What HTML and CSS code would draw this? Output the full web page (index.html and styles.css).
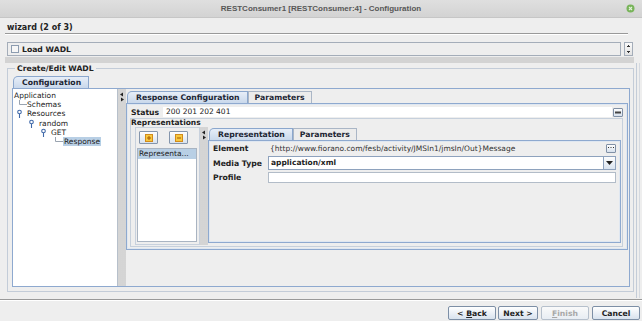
FILE: index.html
```html
<!DOCTYPE html>
<html lang="en">
<head>
    <meta charset="UTF-8">
    <meta name="viewport" content="width=device-width, initial-scale=1.0">
    <title>RESTConsumer1 - Configuration</title>
    <link rel="stylesheet" href="styles.css">
</head>
<body>
    <div class="titlebar">
        <span></span>
        <span class="title">RESTConsumer1 [RESTConsumer:4] - Configuration</span>
        <span class="close">
            <svg width="9" height="9" viewBox="0 0 9 9"><circle cx="4.5" cy="4.5" r="4" fill="#78b45a"/><path d="M3 3l3 3M6 3l-3 3" stroke="#e4f2da" stroke-width="1.1"/></svg>
        </span>
    </div>

    <div class="wizard-head">wizard (2 of 3)</div>

    <div class="load-row">
        <div class="load-box"><span class="check"></span><b>Load WADL</b></div>
        <div class="spinner">
            <svg width="7" height="12" viewBox="0 0 7 12"><path d="M2 4h3v-1h-1v-1h-1v1h-1zM2 8h3v1h-1v1h-1v-1h-1z" fill="#333"/></svg>
        </div>
    </div>

    <div class="hsplit"></div>

    <div class="group-wrap">
        <fieldset class="group">
            <legend>Create/Edit WADL</legend>
            <div class="tabs">
                <div class="tab active">Configuration</div>
            </div>
            <div class="config">
                <div class="tree">
                    <div class="node">Application</div>
                    <div class="node"><svg class="conn" width="13" height="9" viewBox="0 0 13 9"><path d="M5.5 0V4.5H13"/></svg>Schemas</div>
                    <div class="node"><svg class="handle" width="13" height="9" viewBox="0 0 13 9"><circle cx="5.5" cy="3" r="1.8"/><path d="M5.5 4.8V9"/></svg>Resources</div>
                    <div class="node lvl2"><svg class="handle" width="13" height="9" viewBox="0 0 13 9"><circle cx="5.5" cy="3" r="1.8"/><path d="M5.5 4.8V9"/></svg>random</div>
                    <div class="node lvl3"><svg class="handle" width="13" height="9" viewBox="0 0 13 9"><circle cx="5.5" cy="3" r="1.8"/><path d="M5.5 4.8V9"/></svg>GET</div>
                    <div class="node lvl4"><svg class="conn" width="13" height="9" viewBox="0 0 13 9"><path d="M5.5 0V4.5H13"/></svg><span class="sel">Response</span></div>
                </div>

                <div class="vsplit">
                    <svg width="6" height="10" viewBox="0 0 6 10"><path d="M4 0.5L1 2.5L4 4.5Z M2 5.5L5 7.5L2 9.5Z" fill="#222"/></svg>
                </div>

                <div class="resp">
                    <div class="tabs">
                        <div class="tab active">Response Configuration</div>
                        <div class="tab">Parameters</div>
                    </div>
                    <div class="resp-panel">
                        <div class="status-row">
                            <b class="status-label">Status</b>
                            <div class="field">200 201 202 401</div>
                            <span class="mini-btn"><svg width="6" height="3" viewBox="0 0 6 3"><rect x="0" y="0.5" width="6" height="2" fill="#444"/></svg></span>
                        </div>

                        <div class="reps">
                            <div class="reps-title">Representations</div>
                            <div class="reps-body">
                                <div class="rep-list-box">
                                    <div class="rep-buttons">
                                        <span class="tool-btn"><svg width="8" height="8" viewBox="0 0 8 8"><rect x="0.5" y="0.5" width="7" height="7" fill="#f6c840" stroke="#d18b1c"/><path d="M4 2v4M2 4h4" stroke="#a65a00" stroke-width="1"/></svg></span>
                                        <span class="tool-btn"><svg width="8" height="8" viewBox="0 0 8 8"><rect x="0.5" y="0.5" width="7" height="7" fill="#f6c840" stroke="#d18b1c"/><path d="M2 4h4" stroke="#a65a00" stroke-width="1"/></svg></span>
                                    </div>
                                    <div class="rep-list">
                                        <div class="item sel">Representa...</div>
                                    </div>
                                </div>

                                <div class="vsplit small">
                                    <svg width="6" height="10" viewBox="0 0 6 10"><path d="M4 0.5L1 2.5L4 4.5Z M2 5.5L5 7.5L2 9.5Z" fill="#222"/></svg>
                                </div>

                                <div class="rep-detail">
                                    <div class="tabs">
                                        <div class="tab active">Representation</div>
                                        <div class="tab">Parameters</div>
                                    </div>
                                    <div class="rep-panel">
                                        <div class="row element">
                                            <b class="label">Element</b>
                                            <span class="value">{http://www.fiorano.com/fesb/activity/JMSIn1/jmsIn/Out}Message</span>
                                            <span class="mini-btn"><svg width="6" height="2" viewBox="0 0 6 2"><path d="M0 0h1v1h-1zM2.5 0h1v1h-1zM5 0h1v1h-1z" fill="#333"/></svg></span>
                                        </div>
                                        <div class="row media">
                                            <b class="label">Media Type</b>
                                            <div class="combo">application/xml</div>
                                            <span class="combo-arrow"><svg width="7" height="4" viewBox="0 0 7 4"><path d="M0 0h7L3.5 4z" fill="#222"/></svg></span>
                                        </div>
                                        <div class="row profile">
                                            <b class="label">Profile</b>
                                            <div class="input"></div>
                                        </div>
                                    </div>
                                </div>
                            </div>
                        </div>
                    </div>
                </div>
            </div>
        </fieldset>
        <div class="edge"></div>
    </div>

    <div class="footer">
        <button class="btn back">&lt; <u>B</u>ack</button>
        <button class="btn next">Next &gt;</button>
        <button class="btn finish" disabled><u>F</u>inish</button>
        <button class="btn cancel">Cancel</button>
    </div>
</body>
</html>
```

FILE: styles.css
```css
* {
    box-sizing: border-box;
}

body {
    margin: 0;
    width: 642px;
    height: 321px;
    overflow: hidden;
    background-color: #eeeeee;
    font-family: "DejaVu Sans", sans-serif;
    font-size: 7.5px;
    color: #222;
}

b, .tab, legend, .btn {
    font-size: 7.7px;
}

/* window title */
.titlebar {
    height: 18px;
    display: grid;
    grid-template-columns: 1fr auto 1fr;
    align-items: center;
    background: linear-gradient(#dfdfdf, #d3d3d3);
    border-bottom: 1px solid #c6c6c6;
}

.titlebar .title {
    font: bold 8px "Liberation Sans", sans-serif;
    color: #575757;
}

.titlebar .close {
    justify-self: end;
    margin-right: 7px;
    display: flex;
}

.wizard-head {
    margin: 4px 14px 0 5px;
    padding: 0 2px;
    height: 12px;
    line-height: 11px;
    font-size: 8px;
    font-weight: bold;
    border-bottom: 1px solid #999;
    box-shadow: 0 1px 0 #fff;
}

/* load wadl */
.load-row {
    display: flex;
    height: 14px;
    margin-top: 8px;
    padding: 0 9px 0 7px;
}

.load-box {
    flex: 1;
    display: flex;
    align-items: center;
    padding-left: 3px;
    border: 1px solid #a4adb9;
}

.check {
    width: 8px;
    height: 8px;
    margin-right: 3px;
    border: 1px solid #8c9cb0;
    background: #f6f6f6;
}

.spinner {
    width: 9px;
    margin-left: 3px;
    display: flex;
    align-items: center;
    justify-content: center;
    border: 1px solid #a4adb9;
    background: linear-gradient(#fafafa, #e2e2e2);
}

.hsplit {
    height: 6px;
    margin: 1px 8px 0 5px;
    background-image: radial-gradient(circle, #c4c4c4 0.6px, transparent 0.9px);
    background-size: 2px 2px;
}

/* create / edit group */
.group-wrap {
    display: flex;
    height: 229px;
    padding: 0 2px 0 7px;
}

.group {
    flex: 1;
    min-width: 0;
    margin: 0;
    padding: 0 3px 2px 4px;
    border: 1px solid #c3ccd8;
}

.group legend {
    margin-left: 3px;
    padding: 0 2px;
    line-height: 11px;
    font-weight: bold;
}

.edge {
    width: 4px;
    margin: 0 0 -6px 2px;
    border-left: 1px solid #c3ccd8;
    border-right: 1px solid #d4d9e0;
}

.tabs {
    display: flex;
    height: 12px;
    margin-left: 1px;
}

.group > .tabs {
    margin-top: 2px;
}

.tab {
    padding: 0 6px;
    line-height: 11px;
    font-weight: bold;
    color: #1c2533;
    background: #ececec;
    border: 1px solid #aab6c6;
    border-bottom: none;
}

.tab.active {
    padding: 0 7px 0 8px;
    background: linear-gradient(#e7eef8, #c9d8eb);
    border-color: #8ba7cd;
    border-top-left-radius: 5px;
}

.config {
    display: flex;
    height: 199px;
    border: 1px solid #8ea9cf;
}

/* tree */
.tree {
    width: 105px;
    padding: 2px 0 0 1px;
    background: #fff;
    border-right: 1px solid #b7c0cb;
}

.node {
    display: flex;
    align-items: center;
    height: 9.2px;
    white-space: nowrap;
}

.node svg {
    flex: none;
}

.node.lvl2 { padding-left: 12px; }
.node.lvl3 { padding-left: 24px; }
.node.lvl4 { padding-left: 36px; }

.conn path {
    fill: none;
    stroke: #9aa4b0;
    stroke-width: 1;
}

.handle circle,
.handle path {
    fill: none;
    stroke: #3f68a8;
    stroke-width: 1.1;
}

.sel {
    background: #b8cfe5;
}

.node .sel {
    padding: 0 1px;
}

.vsplit {
    width: 8px;
    padding: 3px 0 0 1px;
    background-image: radial-gradient(circle, #c6c6c6 0.6px, transparent 0.9px);
    background-size: 2px 2px;
    background-color: #eee;
}

/* response configuration */
.resp {
    flex: 1;
    display: flex;
    flex-direction: column;
    padding: 2px 1px 0 0;
}

.resp-panel {
    height: 147px;
    padding: 3px 4px 0 3px;
    border: 1px solid #8ea9cf;
    box-shadow: inset 0 0 0 1px #dfe7f1;
}

.status-row {
    display: flex;
    align-items: center;
    height: 10px;
}

.status-label {
    width: 33px;
    padding-left: 1px;
}

.field {
    flex: 1;
    height: 10px;
    line-height: 10px;
    padding-left: 3px;
    background: #fff;
}

.mini-btn {
    flex: none;
    width: 10px;
    height: 9px;
    margin-left: 1px;
    display: flex;
    align-items: center;
    justify-content: center;
    border: 1px solid #8090a6;
    border-radius: 1px;
    background: linear-gradient(#fdfdfd, #d7e1ed);
}

.reps {
    height: 129px;
    margin-top: 1px;
    padding: 0 1px 0 4px;
    border: 1px solid #c6d0dc;
}

.reps-title {
    height: 8px;
    line-height: 8px;
    margin-left: -4px;
    font-weight: bold;
}

.reps-body {
    display: flex;
    height: 118px;
}

.rep-list-box {
    width: 65px;
    display: flex;
    flex-direction: column;
    padding: 3px 2px 2px 1px;
    border: 1px solid #c8d1dd;
}

.rep-buttons {
    display: flex;
    gap: 11px;
    padding-left: 2px;
}

.tool-btn {
    width: 19px;
    height: 13px;
    display: flex;
    align-items: center;
    justify-content: center;
    border: 1px solid #8495ac;
    border-radius: 1px;
    background: linear-gradient(#fdfdfd, #d9e3ef);
}

.rep-list {
    flex: 1;
    margin-top: 4px;
    background: #fff;
    border: 1px solid #a9b4c2;
}

.item {
    height: 10px;
    line-height: 10px;
    padding-left: 1px;
    white-space: nowrap;
    overflow: hidden;
}

.rep-detail {
    flex: 1;
    display: flex;
    flex-direction: column;
    padding-top: 1px;
}

.rep-panel {
    height: 103px;
    padding: 2px 4px 0 4px;
    border: 1px solid #8ea9cf;
    box-shadow: inset 0 0 0 1px #dfe7f1;
}

.row {
    display: flex;
    align-items: center;
}

.row .label {
    width: 55px;
    flex: none;
}

.row.element {
    height: 10px;
}

.row.element .value {
    padding-left: 2px;
    color: #333;
    white-space: nowrap;
}

.row.element .mini-btn {
    margin-left: auto;
}

.row.media {
    height: 14px;
    margin-top: 3px;
}

.combo {
    flex: 1;
    height: 14px;
    line-height: 12px;
    padding-left: 2px;
    font-weight: bold;
    background: #fff;
    border: 1px solid #8ea2bd;
}

.combo-arrow {
    width: 12px;
    height: 14px;
    display: flex;
    align-items: center;
    justify-content: center;
    border: 1px solid #8ea2bd;
    border-left: none;
    background: linear-gradient(#fdfdfd, #d9e3ef);
}

.row.profile {
    height: 11px;
    margin-top: 2px;
}

.input {
    flex: 1;
    height: 11px;
    background: #fff;
    border: 1px solid #b2bcc8;
}

/* wizard buttons */
.footer {
    display: flex;
    justify-content: flex-end;
    gap: 2px;
    margin-top: 7px;
    padding: 6px 2px 0 0;
    border-top: 1px solid #999;
    box-shadow: inset 0 1px 0 #fff;
}

.btn {
    height: 14px;
    padding: 0;
    font-family: "DejaVu Sans", sans-serif;
    font-weight: bold;
    color: #222;
    border: 1px solid #7d8fa6;
    border-radius: 2px;
    background: linear-gradient(#ffffff, #d8e2ee);
}

.btn.back { width: 48px; }
.btn.next { width: 40px; }
.btn.finish { width: 48px; margin-left: 1px; }
.btn.cancel { width: 48px; margin-left: 1px; }

.btn:disabled {
    color: #a8a8a8;
    border-color: #b6c0cc;
    background: linear-gradient(#fafafa, #e8edf3);
}
```
